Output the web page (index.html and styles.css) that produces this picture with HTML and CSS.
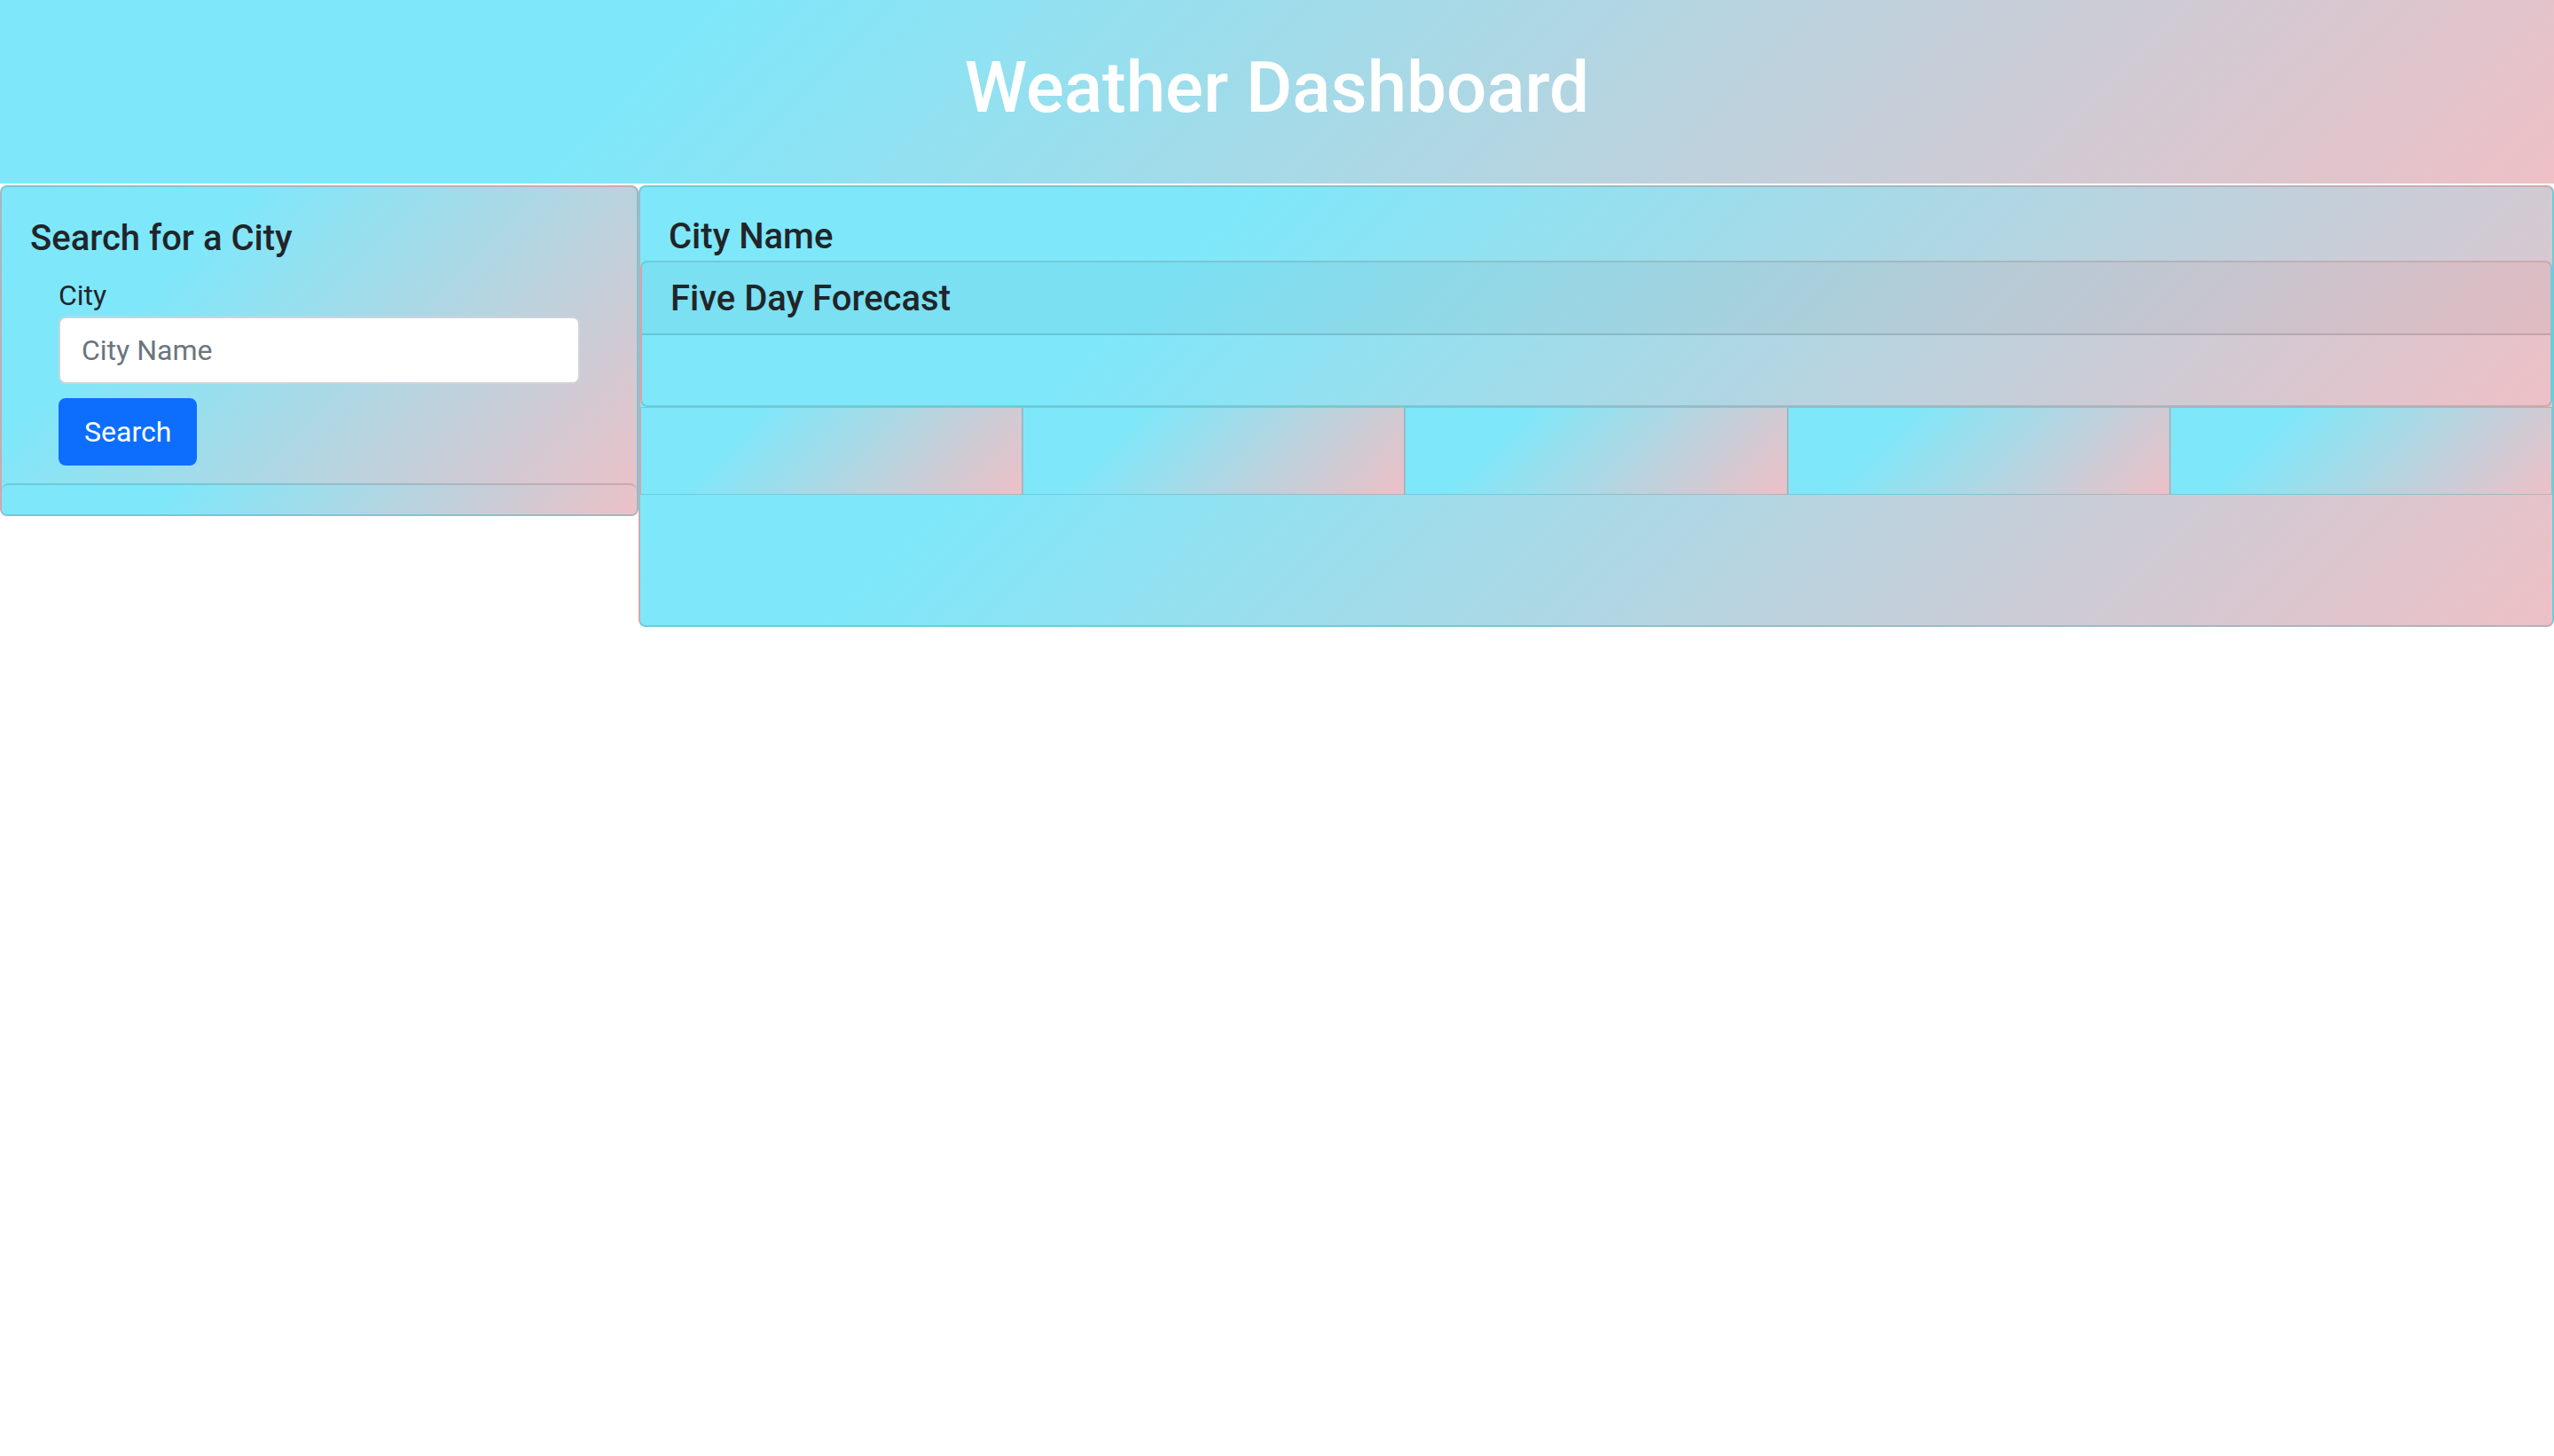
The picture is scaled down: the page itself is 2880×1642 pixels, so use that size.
FILE: index.html
```html
<!DOCTYPE html>
<html lang="en">
<head>
<meta charset="utf-8">
<title>Weather Dashboard</title>
<link rel="stylesheet" href="styles.css">
</head>
<body>
<header class="site-header">
  <h1 class="site-title">Weather Dashboard</h1>
</header>
<main class="layout">
  <aside class="search-card">
    <div class="search-body">
      <h5 class="card-title">Search for a City</h5>
      <form class="search-form">
        <label class="field-label" for="city">City</label>
        <input class="field-input" id="city" type="text" placeholder="City Name">
        <button class="btn-search" type="button">Search</button>
      </form>
    </div>
    <div class="search-footer"></div>
  </aside>
  <section class="weather-card">
    <h5 class="card-title city-name">City Name</h5>
    <div class="forecast-card">
      <div class="forecast-header">
        <h5 class="card-title">Five Day Forecast</h5>
      </div>
      <div class="forecast-body"></div>
    </div>
    <div class="forecast-row">
      <div class="forecast-day"></div>
      <div class="forecast-day"></div>
      <div class="forecast-day"></div>
      <div class="forecast-day"></div>
      <div class="forecast-day"></div>
    </div>
  </section>
</main>
</body>
</html>
```
FILE: styles.css
```css
* { box-sizing: border-box; }

html, body {
  margin: 0;
  padding: 0;
  background: #fff;
}

body {
  font-family: Roboto, "Liberation Sans", Arial, sans-serif;
  color: #212529;
  font-size: 32px;
  line-height: 1.5;
}

.site-header,
.search-card,
.search-footer,
.weather-card,
.forecast-card,
.forecast-day {
  background-color: #7ee8fa;
  background-image: linear-gradient(315deg, #eec0c6 0%, #7ee8fa 74%);
}

.site-header {
  height: 207px;
  padding-top: 51px;
}

.site-title {
  margin: 0;
  text-align: center;
  color: #fff;
  font-size: 80px;
  font-weight: 500;
  line-height: 96px;
}

.layout {
  display: grid;
  grid-template-columns: 720px 1fr;
  align-items: start;
  margin-top: 2px;
}

.card-title {
  margin: 0;
  font-size: 40px;
  font-weight: 500;
  line-height: 48px;
}

.search-card {
  border: 2px solid rgba(0, 0, 0, 0.125);
  border-radius: 8px;
  overflow: hidden;
}

.search-body {
  padding: 34px 32px 20px;
}

.search-body .card-title {
  margin-bottom: 16px;
}

.search-form {
  padding: 0 32px;
}

.field-label {
  display: block;
  font-size: 32px;
  line-height: 48px;
}

.field-input {
  display: block;
  width: 100%;
  height: 76px;
  padding: 12px 24px;
  font-family: inherit;
  font-size: 32px;
  color: #212529;
  background: #fff;
  border: 2px solid #ced4da;
  border-radius: 8px;
}

.field-input::placeholder {
  color: #6c757d;
}

.btn-search {
  display: block;
  margin-top: 16px;
  height: 76px;
  padding: 12px 27px;
  font-family: inherit;
  font-size: 32px;
  line-height: 48px;
  color: #fff;
  background: #0d6efd;
  border: 2px solid #0d6efd;
  border-radius: 8px;
}

.search-footer {
  height: 35px;
  border-top: 2px solid rgba(0, 0, 0, 0.125);
  border-radius: 8px 8px 0 0;
}

.weather-card {
  border: 2px solid rgba(0, 0, 0, 0.125);
  border-radius: 8px;
  padding-bottom: 147px;
}

.city-name {
  padding: 32px 32px 3px;
}

.forecast-card {
  border: 2px solid rgba(0, 0, 0, 0.125);
  border-radius: 8px;
  overflow: hidden;
}

.forecast-header {
  padding: 17px 32px 15px;
  background-color: rgba(0, 0, 0, 0.03);
  border-bottom: 2px solid rgba(0, 0, 0, 0.125);
}

.forecast-body {
  height: 79px;
}

.forecast-row {
  display: flex;
}

.forecast-day {
  flex: 1;
  height: 99px;
  border: 1px solid rgba(0, 0, 0, 0.125);
}
```
